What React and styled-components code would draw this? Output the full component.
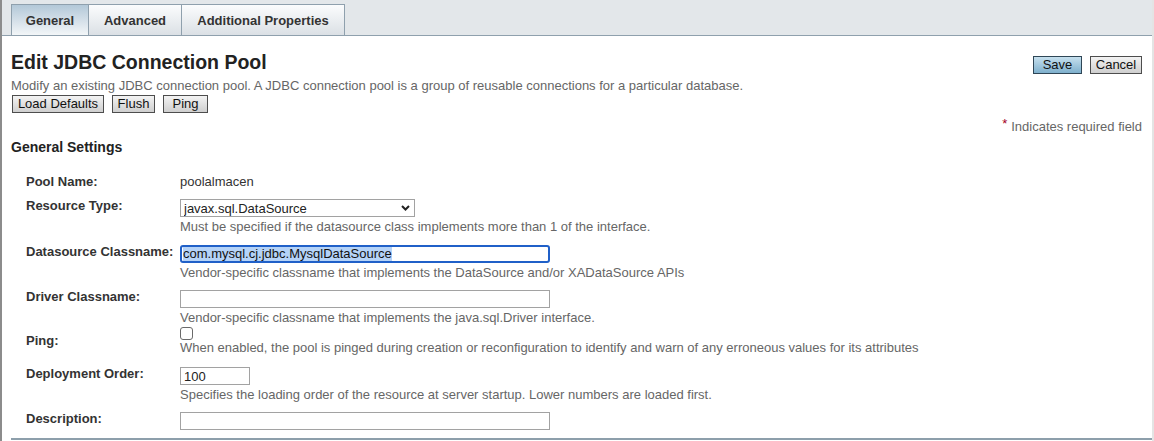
import React from 'react';
import styled, { createGlobalStyle } from 'styled-components';

const GlobalStyle = createGlobalStyle`
  html, body { margin: 0; padding: 0; background: #fff; }
  body {
    font-family: "Liberation Sans", Arial, Helvetica, sans-serif;
    font-size: 13px;
    color: #333;
  }
  * { box-sizing: border-box; }
`;

const Page = styled.div`
  width: 1154px;
  height: 441px;
  overflow: hidden;
  background: #fff;
  border-left: 2px solid #8c8c8c;
  border-right: 2px solid #e4e4e4;
`;

const TabStrip = styled.div`
  display: flex;
  align-items: flex-end;
  height: 36px;
  padding-left: 9px;
  background: #e3e7ea;
  border-bottom: 1px solid #8fa0ad;
`;

const Tab = styled.div`
  width: ${(p) => p.$w}px;
  height: 31px;
  display: flex;
  align-items: center;
  justify-content: center;
  font-size: 13px;
  font-weight: bold;
  color: #333;
  border: 1px solid #8fa0ad;
  border-bottom: none;
  & + & { border-left: none; }
  background: ${(p) =>
    p.$active
      ? 'linear-gradient(#b3c8d8, #f3f6f8)'
      : 'linear-gradient(#fbfcfd, #dbe0e5)'};
`;

const Content = styled.div`
  padding: 0 10px 0 9px;
`;

const Header = styled.div`
  display: flex;
  justify-content: space-between;
  align-items: flex-start;
  margin-top: 14px;
`;

const Title = styled.h1`
  margin: 0;
  font-size: 19.5px;
  line-height: 24px;
  font-weight: bold;
  color: #222;
`;

const Actions = styled.div`
  display: flex;
  gap: 8px;
  margin-top: 6px;
`;

const Description = styled.p`
  margin: 4px 0 0;
  line-height: 16px;
  color: #666;
`;

const ButtonRow = styled.div`
  display: flex;
  gap: 8px;
  margin-top: 1px;
  padding-left: 1px;
`;

const Button = styled.button`
  width: ${(p) => p.$w}px;
  height: 18px;
  padding: 0;
  font-family: inherit;
  font-size: 13px;
  line-height: 16px;
  color: #111;
  border: 1px solid ${(p) => (p.$primary ? '#2f4656' : '#4d4d4d')};
  border-radius: 0;
  background: ${(p) =>
    p.$primary
      ? 'linear-gradient(#c6e0ee, #7eb0cd)'
      : 'linear-gradient(#f3f3f3, #cfcfcf)'};
`;

const Required = styled.div`
  margin-top: 3px;
  text-align: right;
  line-height: 16px;
  color: #666;
`;

const Asterisk = styled.span`
  color: #a3001e;
  vertical-align: 3px;
  margin-right: 4px;
`;

const SectionTitle = styled.h2`
  margin: 3px 0 0;
  font-size: 14px;
  line-height: 18px;
  font-weight: bold;
  color: #222;
`;

const FormRow = styled.div`
  display: grid;
  grid-template-columns: 154px 1fr;
  align-items: start;
  margin-left: 15px;
  margin-top: ${(p) => p.$gap}px;
`;

const Label = styled.div`
  font-weight: bold;
  line-height: 16px;
  color: #333;
  margin-top: ${(p) => p.$top || 0}px;
`;

const Field = styled.div`
  display: flex;
  flex-direction: column;
  align-items: flex-start;
`;

const Value = styled.div`
  line-height: 16px;
  color: #333;
`;

const Help = styled.div`
  margin-top: ${(p) => (p.$tight ? 0 : 2)}px;
  line-height: 16px;
  color: #666;
`;

const TextInput = styled.input`
  width: ${(p) => p.$w}px;
  height: 18px;
  margin: 1px 0 0;
  padding: 0 3px;
  font-family: inherit;
  font-size: 13px;
  color: #222;
  background: #fff;
  border: 1px solid #a2a2a2;
  border-radius: 0;
  outline: none;
`;

const FocusedInput = styled.div`
  width: 370px;
  height: 18px;
  margin-top: 1px;
  padding: 0 1px;
  display: flex;
  align-items: stretch;
  border: 2px solid #2060c8;
  border-radius: 3px;
  background: #fff;
  font-size: 13px;
  line-height: 14px;
  color: #111;
`;

const Selection = styled.span`
  background: #b5d3f8;
`;

const SelectWrap = styled.div`
  position: relative;
  width: 235px;
  height: 18px;
  margin-top: 1px;
`;

const Select = styled.select`
  appearance: none;
  width: 100%;
  height: 100%;
  margin: 0;
  padding: 0 3px;
  font-family: inherit;
  font-size: 13px;
  color: #222;
  background: #fff;
  border: 1px solid #a2a2a2;
  border-radius: 0;
  outline: none;
`;

const Chevron = styled.svg`
  position: absolute;
  right: 5px;
  top: 6px;
  pointer-events: none;
`;

const Checkbox = styled.span`
  display: block;
  width: 13px;
  height: 13px;
  margin-top: 1px;
  border: 1px solid #6a6a6a;
  border-radius: 3px;
  background: #fff;
`;

const BottomRule = styled.div`
  margin: 8px -10px 0 0;
  border-top: 2px solid #8d9fab;
`;

export default function App() {
  return (
    <>
      <GlobalStyle />
      <Page>
        <TabStrip>
          <Tab $active $w={78}>General</Tab>
          <Tab $w={93}>Advanced</Tab>
          <Tab $w={163}>Additional Properties</Tab>
        </TabStrip>
        <Content>
          <Header>
            <Title>Edit JDBC Connection Pool</Title>
            <Actions>
              <Button $primary $w={49}>Save</Button>
              <Button $w={52}>Cancel</Button>
            </Actions>
          </Header>
          <Description>
            Modify an existing JDBC connection pool. A JDBC connection pool is a group of reusable connections for a particular database.
          </Description>
          <ButtonRow>
            <Button $w={92}>Load Defaults</Button>
            <Button $w={43}>Flush</Button>
            <Button $w={45}>Ping</Button>
          </ButtonRow>
          <Required>
            <Asterisk>*</Asterisk>Indicates required field
          </Required>
          <SectionTitle>General Settings</SectionTitle>

          <FormRow $gap={18}>
            <Label>Pool Name:</Label>
            <Field>
              <Value>poolalmacen</Value>
            </Field>
          </FormRow>

          <FormRow $gap={8}>
            <Label>Resource Type:</Label>
            <Field>
              <SelectWrap>
                <Select defaultValue="javax.sql.DataSource">
                  <option>javax.sql.DataSource</option>
                  <option>javax.sql.XADataSource</option>
                  <option>javax.sql.ConnectionPoolDataSource</option>
                  <option>java.sql.Driver</option>
                </Select>
                <Chevron width="9" height="6" viewBox="0 0 9 6">
                  <path d="M1 1 L4.5 4.5 L8 1" fill="none" stroke="#222" strokeWidth="2" />
                </Chevron>
              </SelectWrap>
              <Help>Must be specified if the datasource class implements more than 1 of the interface.</Help>
            </Field>
          </FormRow>

          <FormRow $gap={9}>
            <Label>Datasource Classname:</Label>
            <Field>
              <FocusedInput>
                <Selection>com.mysql.cj.jdbc.MysqlDataSource</Selection>
              </FocusedInput>
              <Help>Vendor-specific classname that implements the DataSource and/or XADataSource APIs</Help>
            </Field>
          </FormRow>

          <FormRow $gap={8}>
            <Label>Driver Classname:</Label>
            <Field>
              <TextInput $w={370} defaultValue="" />
              <Help>Vendor-specific classname that implements the java.sql.Driver interface.</Help>
            </Field>
          </FormRow>

          <FormRow $gap={0}>
            <Label $top={7}>Ping:</Label>
            <Field>
              <Checkbox />
              <Help $tight>When enabled, the pool is pinged during creation or reconfiguration to identify and warn of any erroneous values for its attributes</Help>
            </Field>
          </FormRow>

          <FormRow $gap={10}>
            <Label>Deployment Order:</Label>
            <Field>
              <TextInput $w={70} defaultValue="100" />
              <Help>Specifies the loading order of the resource at server startup. Lower numbers are loaded first.</Help>
            </Field>
          </FormRow>

          <FormRow $gap={8}>
            <Label>Description:</Label>
            <Field>
              <TextInput $w={370} defaultValue="" />
            </Field>
          </FormRow>

          <BottomRule />
        </Content>
      </Page>
    </>
  );
}
